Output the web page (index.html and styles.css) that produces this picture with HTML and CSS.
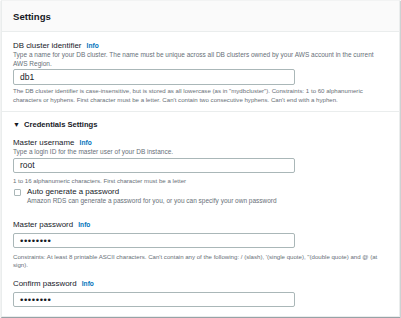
FILE: index.html
```html
<!DOCTYPE html>
<html lang="en">
<head>
  <meta charset="UTF-8" />
  <title>Settings</title>
  <link rel="stylesheet" href="styles.css">
</head>
<body>
  <!-- Panel de configuración -->
  <section class="panel">
    <header class="panel-head">
      <h2>Settings</h2>
    </header>

    <div class="panel-body">
      <div class="field">
        <div class="label">DB cluster identifier <a class="info" href="#">Info</a></div>
        <p class="desc">Type a name for your DB cluster. The name must be unique across all DB clusters owned by your AWS account in the current AWS Region.</p>
        <div class="input input-first">db1</div>
        <p class="hint">The DB cluster identifier is case-insensitive, but is stored as all lowercase (as in "mydbcluster"). Constraints: 1 to 60 alphanumeric characters or hyphens. First character must be a letter. Can't contain two consecutive hyphens. Can't end with a hyphen.</p>
      </div>
    </div>

    <div class="panel-body section">
      <div class="toggle"><span class="caret">&#9660;</span> Credentials Settings</div>

      <div class="field">
        <div class="label">Master username <a class="info" href="#">Info</a></div>
        <p class="desc">Type a login ID for the master user of your DB instance.</p>
        <div class="input">root</div>
        <p class="hint hint-gap">1 to 16 alphanumeric characters. First character must be a letter</p>
      </div>

      <div class="check">
        <span class="box"></span>
        <div>
          <div class="check-label">Auto generate a password</div>
          <p class="desc">Amazon RDS can generate a password for you, or you can specify your own password</p>
        </div>
      </div>

      <div class="field field-pw">
        <div class="label">Master password <a class="info" href="#">Info</a></div>
        <div class="input input-pw">&#8226;&#8226;&#8226;&#8226;&#8226;&#8226;&#8226;&#8226;</div>
        <p class="hint hint-pw">Constraints: At least 8 printable ASCII characters. Can't contain any of the following: / (slash), '(single quote), "(double quote) and @ (at sign).</p>
      </div>

      <div class="field field-confirm">
        <div class="label">Confirm password <a class="info" href="#">Info</a></div>
        <div class="input input-pw">&#8226;&#8226;&#8226;&#8226;&#8226;&#8226;&#8226;&#8226;</div>
      </div>
    </div>
  </section>
</body>
</html>
```

FILE: styles.css
```css
/* Reset básico */
*, *::before, *::after {
  box-sizing: border-box;
  margin: 0;
  padding: 0;
}

body {
  background: #fff;
  color: #16191f;
  font-family: 'Liberation Sans', Arial, sans-serif;
  width: 401px;
  height: 318px;
  overflow: hidden;
}

/* Panel */
.panel {
  margin-left: 1px;
  width: 399px;
  height: 317px;
  border: 1px solid #eaeded;
  border-top-color: #f2f3f3;
  box-shadow: 0 1px 1px 0 rgba(0, 28, 36, .3), 1px 1px 1px 0 rgba(0, 28, 36, .15);
  background: #fff;
}

.panel-head {
  height: 31px;
  background: #fafafa;
  border-bottom: 1px solid #eaeded;
  padding: 0 11px;
  display: flex;
  align-items: center;
}
.panel-head h2 {
  font-size: 9.6px;
  font-weight: bold;
  color: #16191f;
}

.panel-body {
  padding: 8px 11px 7px;
}
.section {
  border-top: 1px solid #eaeded;
  padding-top: 7px;
}

/* Campos */
.label {
  font-size: 7.9px;
  line-height: 11px;
  color: #16191f;
}
.info {
  color: #0073bb;
  font-size: 6.6px;
  font-weight: bold;
  text-decoration: none;
  margin-left: 3px;
}
.desc, .hint {
  font-size: 6.5px;
  line-height: 8.5px;
  color: #687078;
}
.desc {
  margin-bottom: 1px;
}
.hint {
  font-size: 6.1px;
  margin-top: 2px;
}
.hint-gap {
  margin-top: 4px;
}
.hint-pw {
  margin-top: 5px;
  line-height: 8px;
}

.input {
  width: 282px;
  height: 15px;
  border: 1px solid #aab7b8;
  border-radius: 2px;
  font-size: 8.5px;
  line-height: 13px;
  padding: 0 6px;
  color: #16191f;
}
.input-first {
  height: 16px;
  line-height: 14px;
}
.input-pw {
  font-size: 9.5px;
  letter-spacing: .6px;
  margin-top: 3px;
}

/* Credenciales */
.toggle {
  font-size: 7.6px;
  font-weight: bold;
  color: #16191f;
  line-height: 12px;
  margin-bottom: 6px;
}
.caret {
  font-size: 7px;
  margin-right: 2px;
}

.check {
  display: flex;
  gap: 6px;
  margin-top: 2px;
}
.box {
  width: 7px;
  height: 7px;
  margin: 2px 0 0 1px;
  border: 1px solid #aab7b8;
  border-radius: 1px;
  flex: none;
}
.check-label {
  font-size: 7.9px;
  line-height: 10px;
}

.field-pw {
  margin-top: 12px;
}
.field-confirm {
  margin-top: 9px;
}
```
